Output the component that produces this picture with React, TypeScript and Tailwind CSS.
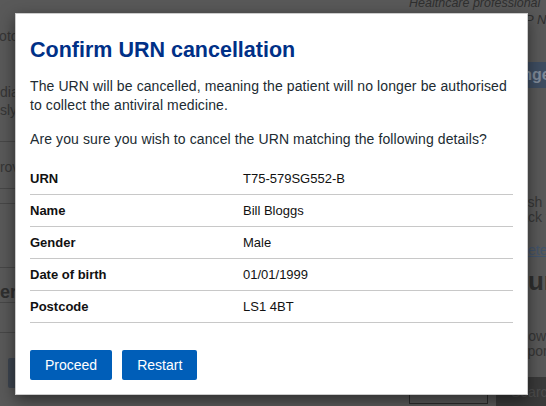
import React from "react";

const rows: [string, string][] = [
  ["URN", "T75-579SG552-B"],
  ["Name", "Bill Bloggs"],
  ["Gender", "Male"],
  ["Date of birth", "01/01/1999"],
  ["Postcode", "LS1 4BT"],
];

function Backdrop() {
  return (
    <div className="flex h-full w-full text-[14px] leading-[16px]">
      {/* left column of the dimmed page */}
      <div className="ml-[-26px] w-[435px] shrink-0 flex flex-col text-[#363636]">
        <div className="mt-[28px] ml-[8px]">Photo</div>
        <div className="mt-[39px] ml-[-9px] leading-[18px]">Immediately</div>
        <div className="ml-[-20px] leading-[18px]">previously</div>
        <div className="mt-[22px] h-px bg-[#474747]" />
        <div className="mt-[17px] ml-[1px]">Approved</div>
        <div className="mt-[13px] h-px bg-[#474747]" />
        <div className="mt-[14px] h-px bg-[#474747]" />
        <div className="mt-[63px] h-px bg-[#474747]" />
        <div className="mt-[14px] ml-[-6px] text-[18px] leading-[20px] font-bold text-[#2f2f2f]">
          Order
        </div>
        <div className="h-px bg-[#474747]" />
        <div className="mt-[29px] h-px bg-[#474747]" />
        <div className="mt-[25px] ml-[34px] w-[80px] h-[30px] bg-[#3d4550] rounded-[2px]" />
      </div>
      {/* right column of the dimmed page */}
      <div className="w-[300px] shrink-0 flex flex-col text-[#363636]">
        <div className="mt-[-4px] italic text-[12.5px] leading-[14px] text-[#2f2f2f]">
          Healthcare professional
        </div>
        <div className="mt-[3px] ml-[106px] italic text-[13px] leading-[14px] text-[#2f2f2f]">
          GP Name
        </div>
        <div className="mt-[35px] ml-[71px] h-[26px] bg-[#3e4d61] text-[#7f8a99] font-bold text-[16px] leading-[26px] pl-[12px]">
          Change Patient
        </div>
        <div className="mt-[107px] ml-[96px] leading-[15px]">Finish Search</div>
        <div className="ml-[102px] leading-[15px]">Back to</div>
        <div className="mt-[17px] ml-[98px] underline text-[#42546b]">Delete</div>
        <div className="mt-[10px] ml-[77px] text-[26px] leading-[26px] font-bold text-[#2f2f2f]">
          Return
        </div>
        <div className="mt-[35px] ml-[99px] leading-[15px]">Below</div>
        <div className="ml-[103px] leading-[15px]">Import</div>
        <div className="mt-[15px] flex items-start">
          <div className="w-[79px] h-[30px] border border-[#2a2a2a]" />
          <div className="ml-[8px] mt-[3px] w-[80px] h-[30px] bg-[#3a3a3a] text-[#4d4d4d] text-[14px] leading-[30px] pl-[15px]">
            Search
          </div>
        </div>
      </div>
    </div>
  );
}

export default function App() {
  return (
    <div className="relative w-[546px] h-[406px] overflow-hidden bg-[#595959] font-['Liberation_Sans',Arial,sans-serif]">
      <Backdrop />
      <div className="absolute left-[15px] top-[13px] w-[513px] h-[382px] bg-white border border-black/20 shadow-[0_5px_15px_rgba(0,0,0,0.5)] px-[14px] pt-[24px] pb-[14px] flex flex-col">
        <h2 className="text-[21.5px] leading-[24px] font-bold text-[#003087] mb-[15px]">
          Confirm URN cancellation
        </h2>
        <p className="text-[14px] leading-[19px] tracking-[0.1px] text-[#212b32] mb-[15px]">
          The URN will be cancelled, meaning the patient will no longer be authorised
          <br />
          to collect the antiviral medicine.
        </p>
        <p className="text-[14px] leading-[19px] tracking-[0.1px] text-[#212b32] mb-[14px]">
          Are you sure you wish to cancel the URN matching the following details?
        </p>
        <div className="flex flex-col">
          {rows.map(([label, value]) => (
            <div
              key={label}
              className="grid grid-cols-[213px_1fr] py-[6px] border-b border-[#c8c8c8] text-[13px] leading-[19px] text-[#111]"
            >
              <div className="font-bold">{label}</div>
              <div>{value}</div>
            </div>
          ))}
        </div>
        <div className="mt-[27px] flex gap-[10px]">
          <button className="bg-[#005eb8] text-white text-[14px] leading-[20px] px-[15px] py-[5px] rounded-[2px]">
            Proceed
          </button>
          <button className="bg-[#005eb8] text-white text-[14px] leading-[20px] px-[15px] py-[5px] rounded-[2px]">
            Restart
          </button>
        </div>
      </div>
    </div>
  );
}
